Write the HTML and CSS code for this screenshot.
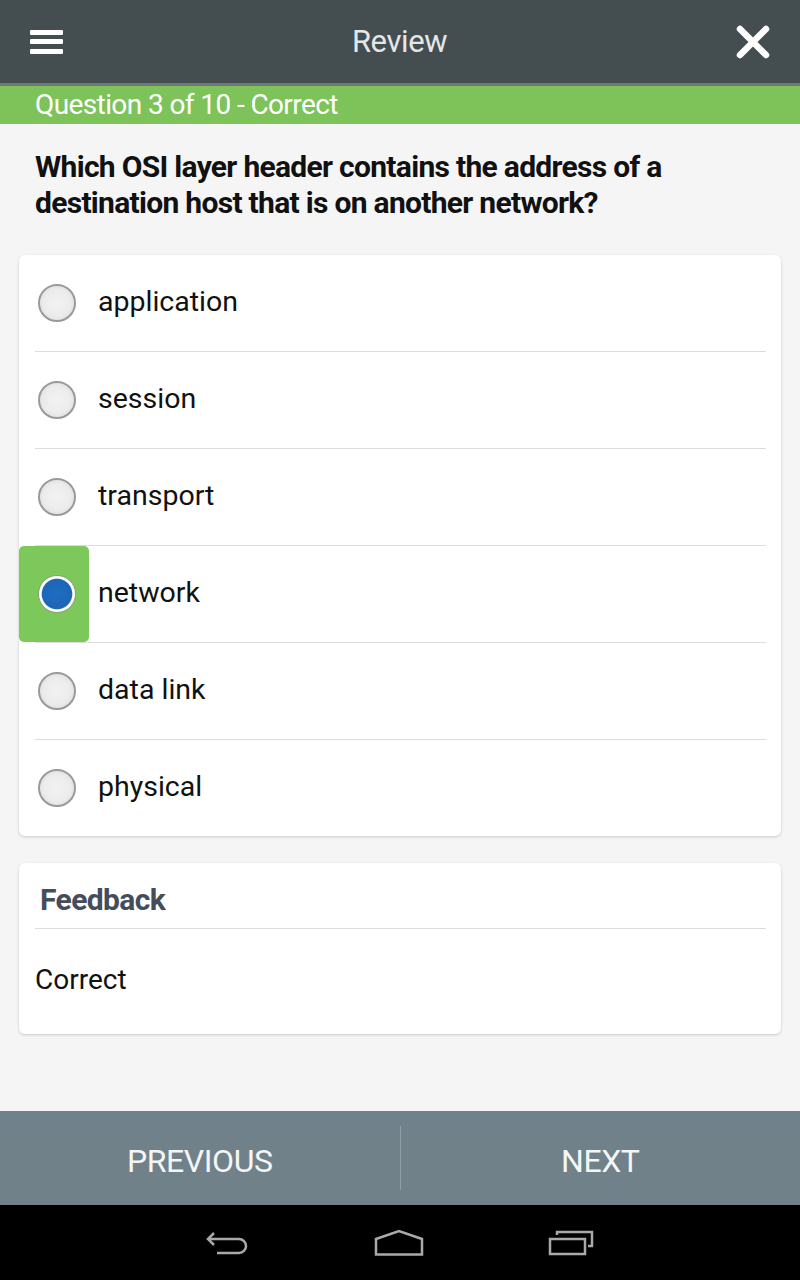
FILE: index.html
```html
<!DOCTYPE html>
<html lang="en">
<head>
    <meta charset="UTF-8">
    <meta name="viewport" content="width=device-width, initial-scale=1.0">
    <title>Review</title>
    <link rel="stylesheet" href="styles.css">
</head>
<body>
    <div class="screen">
        <header class="topbar">
            <button class="icon-btn menu" aria-label="Menu">
                <span></span><span></span><span></span>
            </button>
            <h1 class="title">Review</h1>
            <button class="icon-btn close" aria-label="Close">
                <svg width="34" height="34" viewBox="0 0 34 34">
                    <path d="M4 4 L30 30 M30 4 L4 30" stroke="#fff" stroke-width="6.5" stroke-linecap="round"/>
                </svg>
            </button>
        </header>
        <div class="status">Question 3 of 10 - Correct</div>

        <main class="content">
            <p class="question">Which OSI layer header contains the address of a destination host that is on another network?</p>

            <div class="card answers">
                <div class="option">
                    <div class="mark"><span class="radio"></span></div>
                    <span class="label">application</span>
                </div>
                <hr class="divider">
                <div class="option">
                    <div class="mark"><span class="radio"></span></div>
                    <span class="label">session</span>
                </div>
                <hr class="divider">
                <div class="option">
                    <div class="mark"><span class="radio"></span></div>
                    <span class="label">transport</span>
                </div>
                <hr class="divider">
                <div class="option correct">
                    <div class="mark"><span class="radio checked"></span></div>
                    <span class="label">network</span>
                </div>
                <hr class="divider">
                <div class="option">
                    <div class="mark"><span class="radio"></span></div>
                    <span class="label">data link</span>
                </div>
                <hr class="divider">
                <div class="option">
                    <div class="mark"><span class="radio"></span></div>
                    <span class="label">physical</span>
                </div>
            </div>

            <div class="card feedback">
                <h2 class="feedback-title">Feedback</h2>
                <hr class="divider">
                <p class="feedback-text">Correct</p>
            </div>
        </main>

        <footer class="pager">
            <button class="pager-btn">PREVIOUS</button>
            <span class="pager-sep"></span>
            <button class="pager-btn">NEXT</button>
        </footer>

        <nav class="sysbar">
            <svg width="48" height="28" viewBox="0 0 48 28">
                <!-- back -->
                <path d="M11 4 L5 10 L11 16 M5 10 H36 A7 7 0 0 1 36 24 H14" fill="none" stroke="#a9a9a9" stroke-width="2.5"/>
            </svg>
            <svg width="52" height="28" viewBox="0 0 52 28">
                <!-- home -->
                <path d="M3 25.5 V10 L26 2 L49 10 V25.5 Z" fill="none" stroke="#a9a9a9" stroke-width="2.5" stroke-linejoin="miter"/>
            </svg>
            <svg width="50" height="28" viewBox="0 0 50 28">
                <!-- recent apps -->
                <rect x="3" y="10" width="35" height="15" fill="none" stroke="#a9a9a9" stroke-width="2.5"/>
                <path d="M10 6 V3 H45 V17 H41" fill="none" stroke="#a9a9a9" stroke-width="2.5"/>
            </svg>
        </nav>
    </div>
</body>
</html>
```

FILE: styles.css
```css
body {
    margin: 0;
    font-family: Roboto, "Noto Sans", sans-serif;
    background-color: #000;
}
.screen {
    width: 800px;
    height: 1280px;
    display: flex;
    flex-direction: column;
    background-color: #f5f5f5;
}

/* top action bar */
.topbar {
    height: 83px;
    flex: none;
    display: flex;
    align-items: center;
    justify-content: space-between;
    padding: 0 30px 0 30px;
    background-color: #444e51;
    border-bottom: 3px solid #6f797c;
}
.icon-btn {
    background: none;
    border: none;
    padding: 0;
    cursor: pointer;
}
.menu {
    width: 33px;
    display: flex;
    flex-direction: column;
    gap: 4.5px;
}
.menu span {
    display: block;
    height: 5px;
    background-color: #fff;
    border-radius: 1px;
}
.close {
    width: 34px;
    height: 34px;
}
.close svg {
    display: block;
}
.title {
    margin: 0;
    font-size: 31px;
    font-weight: 400;
    color: #e3e7e8;
    letter-spacing: -0.4px;
}

/* question status strip */
.status {
    height: 38px;
    flex: none;
    padding-left: 35px;
    background-color: #7dc35a;
    color: #fff;
    font-size: 28px;
    line-height: 38px;
    letter-spacing: -0.6px;
}

.content {
    flex: 1;
    padding: 0 19px;
}
.question {
    margin: 25px 0 34px 16px;
    font-size: 30px;
    font-weight: 700;
    line-height: 36px;
    color: #111;
    letter-spacing: -0.7px;
}

.card {
    background-color: #fff;
    border-radius: 6px;
    box-shadow: 0 1px 3px rgba(0, 0, 0, 0.18);
}
.divider {
    margin: 0 15px 0 16px;
    border: none;
    border-top: 1px solid #dcdcdc;
    height: 0;
}

/* answer options */
.option {
    height: 96px;
    display: flex;
    align-items: center;
}
.mark {
    width: 70px;
    height: 100%;
    box-sizing: border-box;
    padding-left: 19px;
    display: flex;
    align-items: center;
    border-radius: 5px;
}
.correct .mark {
    background-color: #7dc85a;
}
.radio {
    width: 38px;
    height: 38px;
    box-sizing: border-box;
    border-radius: 50%;
    border: 2px solid #9a9a9a;
    background: radial-gradient(circle, #f2f2f2 0, #ececec 55%, #e4e4e4 70%, #fafafa 76%);
}
.radio.checked {
    border: 1px solid #8aa07c;
    background: radial-gradient(circle, #1f6cc0 0, #1c66b8 58%, #ffffff 62%);
}
.label {
    margin-left: 9px;
    margin-bottom: 3px;
    font-size: 28.5px;
    color: #111;
}

/* feedback box */
.feedback {
    margin-top: 27px;
    height: 171px;
}
.feedback-title {
    margin: 0 0 0 21px;
    height: 65px;
    box-sizing: border-box;
    padding-top: 20px;
    font-size: 30px;
    font-weight: 700;
    line-height: 34px;
    color: #444d5a;
    letter-spacing: -0.6px;
}
.feedback-text {
    margin: 33px 0 0 16px;
    font-size: 28px;
    line-height: 36px;
    color: #111;
}

/* previous / next */
.pager {
    height: 94px;
    flex: none;
    display: flex;
    align-items: center;
    background-color: #718189;
}
.pager-btn {
    flex: 1;
    height: 100%;
    padding-top: 6px;
    background: none;
    border: none;
    color: #f4f6f6;
    font-family: Roboto, sans-serif;
    font-size: 32px;
    letter-spacing: -0.4px;
    cursor: pointer;
}
.pager-sep {
    width: 1px;
    height: 64px;
    background-color: #919ea4;
}

/* android navigation bar */
.sysbar {
    height: 75px;
    flex: none;
    display: flex;
    align-items: center;
    justify-content: center;
    gap: 122px;
    background-color: #000;
}
.sysbar svg {
    display: block;
}
```
